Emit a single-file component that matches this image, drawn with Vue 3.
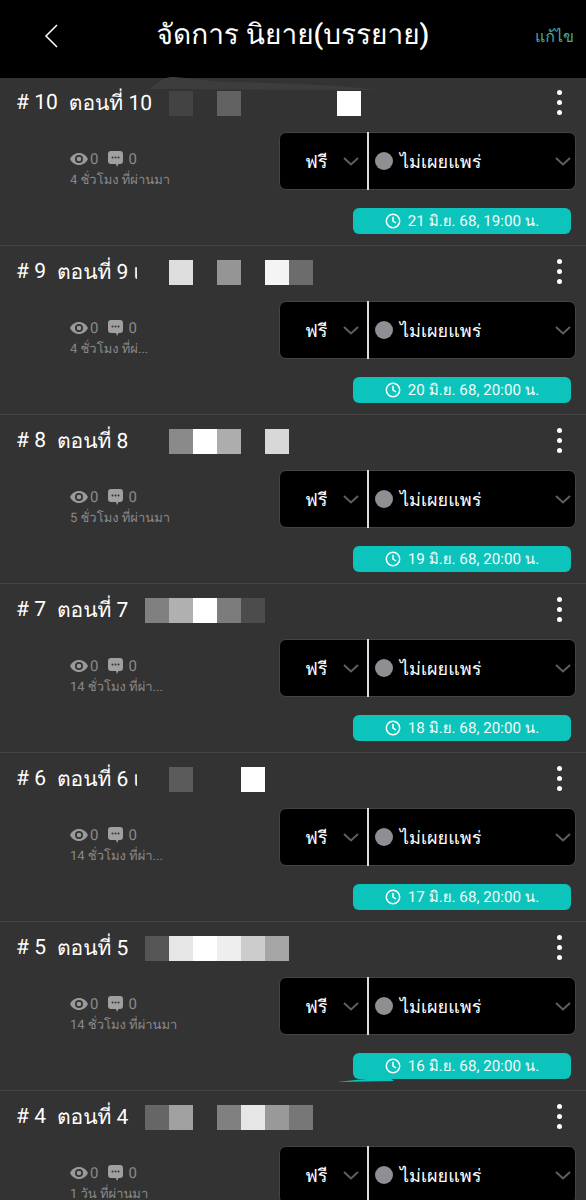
<template>
  <div class="page">
    <header class="top">
      <svg class="back" width="14" height="24" viewBox="0 0 14 24"><path d="M13 1 2 12l11 11" fill="none" stroke="#fff" stroke-width="1.500" /></svg>
      <h1 class="title">จัดการ นิยาย(บรรยาย)</h1>
      <span class="edit">แก้ไข</span>
    </header>
    <div v-for="ep in episodes" :key="ep.no" class="row">
      <div class="row-head">
        <span class="no"># {{ ep.no }}</span>
        <span class="name">ตอนที่ {{ ep.no }}</span>
        <span v-if="ep.tail" class="tail">{{ ep.tail }}</span>
        <div class="mosaic" :style="{ left: ep.left + 'px' }">
          <i v-for="(c, i) in ep.cells" :key="i" :style="{ background: c }"></i>
        </div>
        <div class="dots"><b></b><b></b><b></b></div>
      </div>
      <div class="row-body">
        <div class="meta">
          <div class="counts">
            <svg width="18" height="12" viewBox="0 0 18 12"><path d="M9 0C5 0 1.700 2.500 0 6c1.700 3.500 5 6 9 6s7.300-2.500 9-6c-1.700-3.500-5-6-9-6Zm0 10a4 4 0 1 1 0-8 4 4 0 0 1 0 8Zm0-6.300a2.300 2.300 0 1 0 0 4.600 2.300 2.300 0 0 0 0-4.600Z" fill="#9a9a9a" /></svg>
            <span>0</span>
            <svg class="bubble" width="15" height="16" viewBox="0 0 15 16"><path d="M3 0h9a3 3 0 0 1 3 3v7a3 3 0 0 1-3 3h-1.500L9 16l-1-3H3a3 3 0 0 1-3-3V3a3 3 0 0 1 3-3Z" fill="#a0a0a0" /><circle cx="4.500" cy="6.500" r="1" fill="#333" /><circle cx="7.500" cy="6.500" r="1" fill="#333" /><circle cx="10.500" cy="6.500" r="1" fill="#333" /></svg>
            <span>0</span>
          </div>
          <div class="ago">{{ ep.ago }}</div>
        </div>
        <div class="controls">
          <div class="selects">
            <div class="sel-price">
              <span>ฟรี</span>
              <svg class="chev" width="16" height="9" viewBox="0 0 16 9"><path d="m1 1 7 6.500L15 1" fill="none" stroke="#5f5f5f" stroke-width="2" /></svg>
            </div>
            <div class="sel-status">
              <i class="dot"></i>
              <span>ไม่เผยแพร่</span>
              <svg class="chev end" width="16" height="9" viewBox="0 0 16 9"><path d="m1 1 7 6.500L15 1" fill="none" stroke="#5f5f5f" stroke-width="2" /></svg>
            </div>
          </div>
          <div class="when">
            <svg width="16" height="16" viewBox="0 0 16 16"><circle cx="8" cy="8" r="6.700" fill="none" stroke="#fff" stroke-width="1.500" /><path d="M8 3.800V8l3 2" fill="none" stroke="#fff" stroke-width="1.500" /></svg>
            <span>{{ ep.date }}</span>
          </div>
        </div>
      </div>
    </div>
    <!-- retouch marks left on the original capture -->
    <svg class="smudge-top" width="226" height="13" viewBox="0 0 226 13"><path d="M0 12C8 5 14 0 22 0c12 0 30 4 60 5 50 1 110 3 144 8Z" fill="#3d3d3d" /></svg>
    <svg class="smudge-teal" width="56" height="4" viewBox="0 0 56 4"><path d="M0 4C10 3 24 1 40 0h12l4 3Z" fill="#0cc4bb" /></svg>
  </div>
</template>

<script setup>
const episodes = [
  { no: 10, ago: '4 ชั่วโมง ที่ผ่านมา', date: '21 มิ.ย. 68, 19:00 น.', left: 169, cells: ['#434343', 'transparent', '#626262', 'transparent', 'transparent', 'transparent', 'transparent', '#fff'] },
  { no: 9, tail: 'เ', ago: '4 ชั่วโมง ที่ผ่...', date: '20 มิ.ย. 68, 20:00 น.', left: 169, cells: ['#dedede', 'transparent', '#959595', 'transparent', '#f4f4f4', '#6c6c6c'] },
  { no: 8, ago: '5 ชั่วโมง ที่ผ่านมา', date: '19 มิ.ย. 68, 20:00 น.', left: 169, cells: ['#8a8a8a', '#fff', '#adadad', 'transparent', '#d8d8d8'] },
  { no: 7, ago: '14 ชั่วโมง ที่ผ่า...', date: '18 มิ.ย. 68, 20:00 น.', left: 145, cells: ['#808080', '#b0b0b0', '#fff', '#7c7c7c', '#4c4c4c'] },
  { no: 6, tail: 'เ', ago: '14 ชั่วโมง ที่ผ่า...', date: '17 มิ.ย. 68, 20:00 น.', left: 169, cells: ['#5a5a5a', 'transparent', 'transparent', '#fff'] },
  { no: 5, ago: '14 ชั่วโมง ที่ผ่านมา', date: '16 มิ.ย. 68, 20:00 น.', left: 145, cells: ['#555', '#e6e6e6', '#fff', '#eee', '#ccc', '#a5a5a5'] },
  { no: 4, ago: '1 วัน ที่ผ่านมา', date: '15 มิ.ย. 68, 20:00 น.', left: 145, cells: ['#666', '#a0a0a0', 'transparent', '#808080', '#e6e6e6', '#999', '#777'] },
]
</script>

<style>
html, body { background: #333; }
</style>

<style scoped>
.page {
  width: 586px;
  height: 1200px;
  overflow: hidden;
  position: relative;
  background: #333;
  color: #fff;
  font-family: Roboto, "Noto Sans", sans-serif;
  text-rendering: geometricPrecision;
}
.top {
  height: 78px;
  margin-bottom: -1px;
  background: #000;
  display: flex;
  align-items: center;
  justify-content: center;
  position: relative;
}
.back { position: absolute; left: 44px; top: 24px; }
.title { margin: 0; font-size: 28px; font-weight: 500; position: relative; top: -4px; }
.edit { position: absolute; right: 12px; top: 25px; font-size: 16px; color: #46a99f; }
.row {
  height: 169px;
  border-bottom: 1px solid #444;
  box-sizing: border-box;
}
.row-head {
  height: 52px;
  margin-bottom: 3px;
  padding-left: 16px;
  display: flex;
  align-items: center;
  position: relative;
  font-size: 21px;
}
.no { margin-right: 11px; }
.tail { width: 4px; overflow: hidden; margin-left: 5px; }
.mosaic { position: absolute; top: 14px; display: flex; }
.mosaic i { display: block; width: 24px; height: 25px; }
.dots {
  position: absolute;
  right: 24px;
  top: 13px;
  display: flex;
  flex-direction: column;
  gap: 5px;
}
.dots b { width: 5px; height: 5px; border-radius: 50%; background: #fff; }
.row-body { display: flex; justify-content: space-between; }
.meta { padding: 19px 0 0 70px; color: #8a8a8a; font-size: 13px; }
.counts { display: flex; align-items: center; gap: 2px; height: 16px; font-size: 15px; }
.bubble { margin-left: 8px; margin-right: 3px; }
.ago { margin-top: 5px; line-height: 18px; }
.controls { width: 297px; margin-right: 10px; }
.selects {
  height: 58px;
  background: #000;
  border: 1px solid #444;
  border-radius: 7px;
  box-sizing: border-box;
  display: flex;
  font-size: 18px;
}
.sel-price {
  width: 89px;
  display: flex;
  align-items: center;
  padding-left: 25px;
  box-sizing: border-box;
  gap: 16px;
  border-right: 2px solid #ddd;
  margin: -1px 0;
}
.sel-status {
  flex: 1;
  display: flex;
  align-items: center;
  padding-left: 6px;
  gap: 7px;
}
.dot { width: 18px; height: 18px; border-radius: 50%; background: #8e8e93; }
.chev.end { margin-left: auto; margin-right: 4px; }
.when {
  width: 218px;
  height: 26px;
  margin: 18px 5px 0 auto;
  background: #0cc4bb;
  border-radius: 6px;
  display: flex;
  align-items: center;
  justify-content: center;
  gap: 7px;
  font-size: 15.200px;
  color: #f2fbfa;
}
.smudge-top { position: absolute; left: 150px; top: 77px; }
.smudge-teal { position: absolute; left: 338px; top: 1078px; }
</style>
